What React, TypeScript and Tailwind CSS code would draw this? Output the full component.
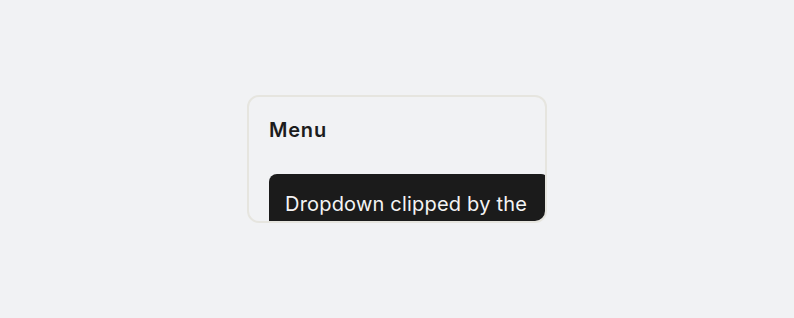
export default function App() {
  return (
    <div className="flex h-[318px] w-full items-center justify-center bg-[#f1f2f4]" style={{ fontFamily: "Inter, 'Noto Sans', sans-serif" }}>
      <div className="relative h-[128px] w-[300px] overflow-hidden rounded-xl border-2 border-[#e6e5df] bg-[#f1f2f4] p-5">
        <h2 className="pt-[1px] text-[20px] leading-6 font-semibold tracking-[0.04em] text-[#1c1c1c]">Menu</h2>
        <div className="mt-[32px] w-[280px] rounded-lg bg-[#1b1b1b] px-4 pt-4 pb-4 text-[20px] leading-7 tracking-[0.01em] text-[#f4f4f4]">
          Dropdown clipped by the card's overflow: hidden
        </div>
      </div>
    </div>
  );
}
